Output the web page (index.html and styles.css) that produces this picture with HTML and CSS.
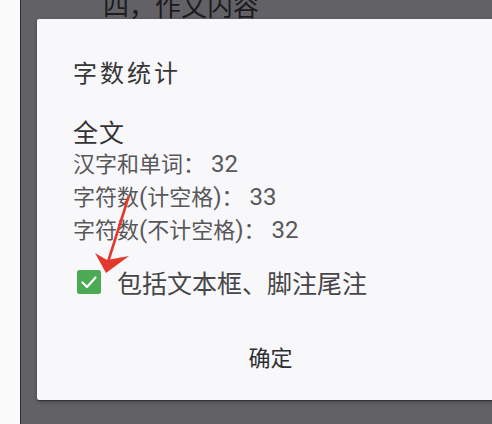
FILE: index.html
```html
<!DOCTYPE html>
<html lang="zh-CN">
<head>
<meta charset="utf-8">
<title>字数统计</title>
<link rel="stylesheet" href="styles.css">
</head>
<body>
<div class="screen">
  <div class="page-edge"></div>
  <main class="doc">
    <p class="doc-heading">四，作文内容</p>
    <section class="dialog">
      <h2 class="dialog-title">字数统计</h2>
      <h3 class="stats-heading">全文</h3>
      <ul class="stats">
        <li>汉字和单词：<span class="num"> 32</span></li>
        <li>字符数<span class="num">(</span>计空格<span class="num">)</span>：<span class="num"> 33</span></li>
        <li>字符数<span class="num">(</span>不计空格<span class="num">)</span>：<span class="num"> 32</span></li>
      </ul>
      <label class="option">
        <span class="checkbox">
          <svg viewBox="0 0 24 24" width="24" height="24" aria-hidden="true">
            <rect x="0" y="0" width="24" height="24" rx="2.5" fill="#4caa55"/>
            <path d="M5.5 12.5 L10 17 L18.5 7.5" fill="none" stroke="#fff" stroke-width="2.2" stroke-linecap="round" stroke-linejoin="round"/>
          </svg>
        </span>
        <span class="option-text">包括文本框、脚注尾注</span>
      </label>
      <div class="actions">
        <button class="ok" type="button">确定</button>
      </div>
    </section>
  </main>
  <svg class="pointer" width="492" height="424" viewBox="0 0 492 424" aria-hidden="true">
    <path d="M128.5 197 L108 262" stroke="#e2392b" stroke-width="2.6" stroke-linecap="round" fill="none"/>
    <polygon points="106,273 95,253 107,260 129,256" fill="#e2392b"/>
  </svg>
</div>
</body>
</html>
```

FILE: styles.css
```css
* {
  box-sizing: border-box;
}

html, body {
  margin: 0;
  padding: 0;
  width: 492px;
  height: 424px;
  overflow: hidden;
}

body {
  background: #626165;
  font-family: "Noto Sans CJK SC", sans-serif;
}

.screen {
  position: relative;
  display: flex;
  height: 424px;
}

/* white strip of the page behind the dimmed overlay */
.page-edge {
  flex: 0 0 21px;
  background: #fbfbfb;
  border-right: 1px solid #2e2e30;
}

.doc {
  flex: 1 1 auto;
  min-width: 0;
  padding-left: 16px;
}

.doc-heading {
  margin: -8px 0 0 66px;
  font-size: 26px;
  line-height: 26px;
  color: #1c1c1e;
  white-space: nowrap;
}

.dialog {
  width: 467px;
  margin-top: 1px;
  padding: 38px 0 20px 36px;
  background: #f8f7fa;
  border-radius: 2px;
  box-shadow: 0 1px 1px rgba(0, 0, 0, 0.35), 0 2px 4px rgba(0, 0, 0, 0.25);
}

.dialog-title {
  margin: 0;
  font-weight: 400;
  font-size: 24px;
  line-height: 30px;
  letter-spacing: 3px;
  color: #363636;
}

.stats-heading {
  margin: 29px 0 0;
  font-weight: 400;
  font-size: 25px;
  line-height: 30px;
  letter-spacing: 1px;
  color: #333;
}

.stats {
  list-style: none;
  margin: 0;
  padding: 0;
  font-size: 22px;
  line-height: 33px;
  color: #58585a;
  white-space: nowrap;
}

.stats li {
  height: 33px;
}

/* digits and brackets are set in the Latin face, a touch larger */
.num {
  font-family: Roboto, sans-serif;
  font-size: 24px;
  line-height: 20px;
  white-space: pre;
}

.option {
  display: flex;
  align-items: center;
  gap: 16px;
  margin-top: 22px;
  height: 30px;
  padding-left: 4px;
}

.checkbox {
  display: block;
  width: 24px;
  height: 24px;
}

.checkbox svg {
  display: block;
}

.option-text {
  font-size: 25px;
  line-height: 30px;
  color: #464648;
}

.actions {
  display: flex;
  justify-content: center;
  margin: 35px 0 0 -36px;
}

.ok {
  border: 0;
  background: none;
  padding: 0;
  font-family: "Noto Sans CJK SC", sans-serif;
  font-size: 22px;
  line-height: 48px;
  color: #2e2e30;
}

/* red annotation arrow drawn over the dialog */
.pointer {
  position: absolute;
  left: 0;
  top: 0;
  pointer-events: none;
}
```
